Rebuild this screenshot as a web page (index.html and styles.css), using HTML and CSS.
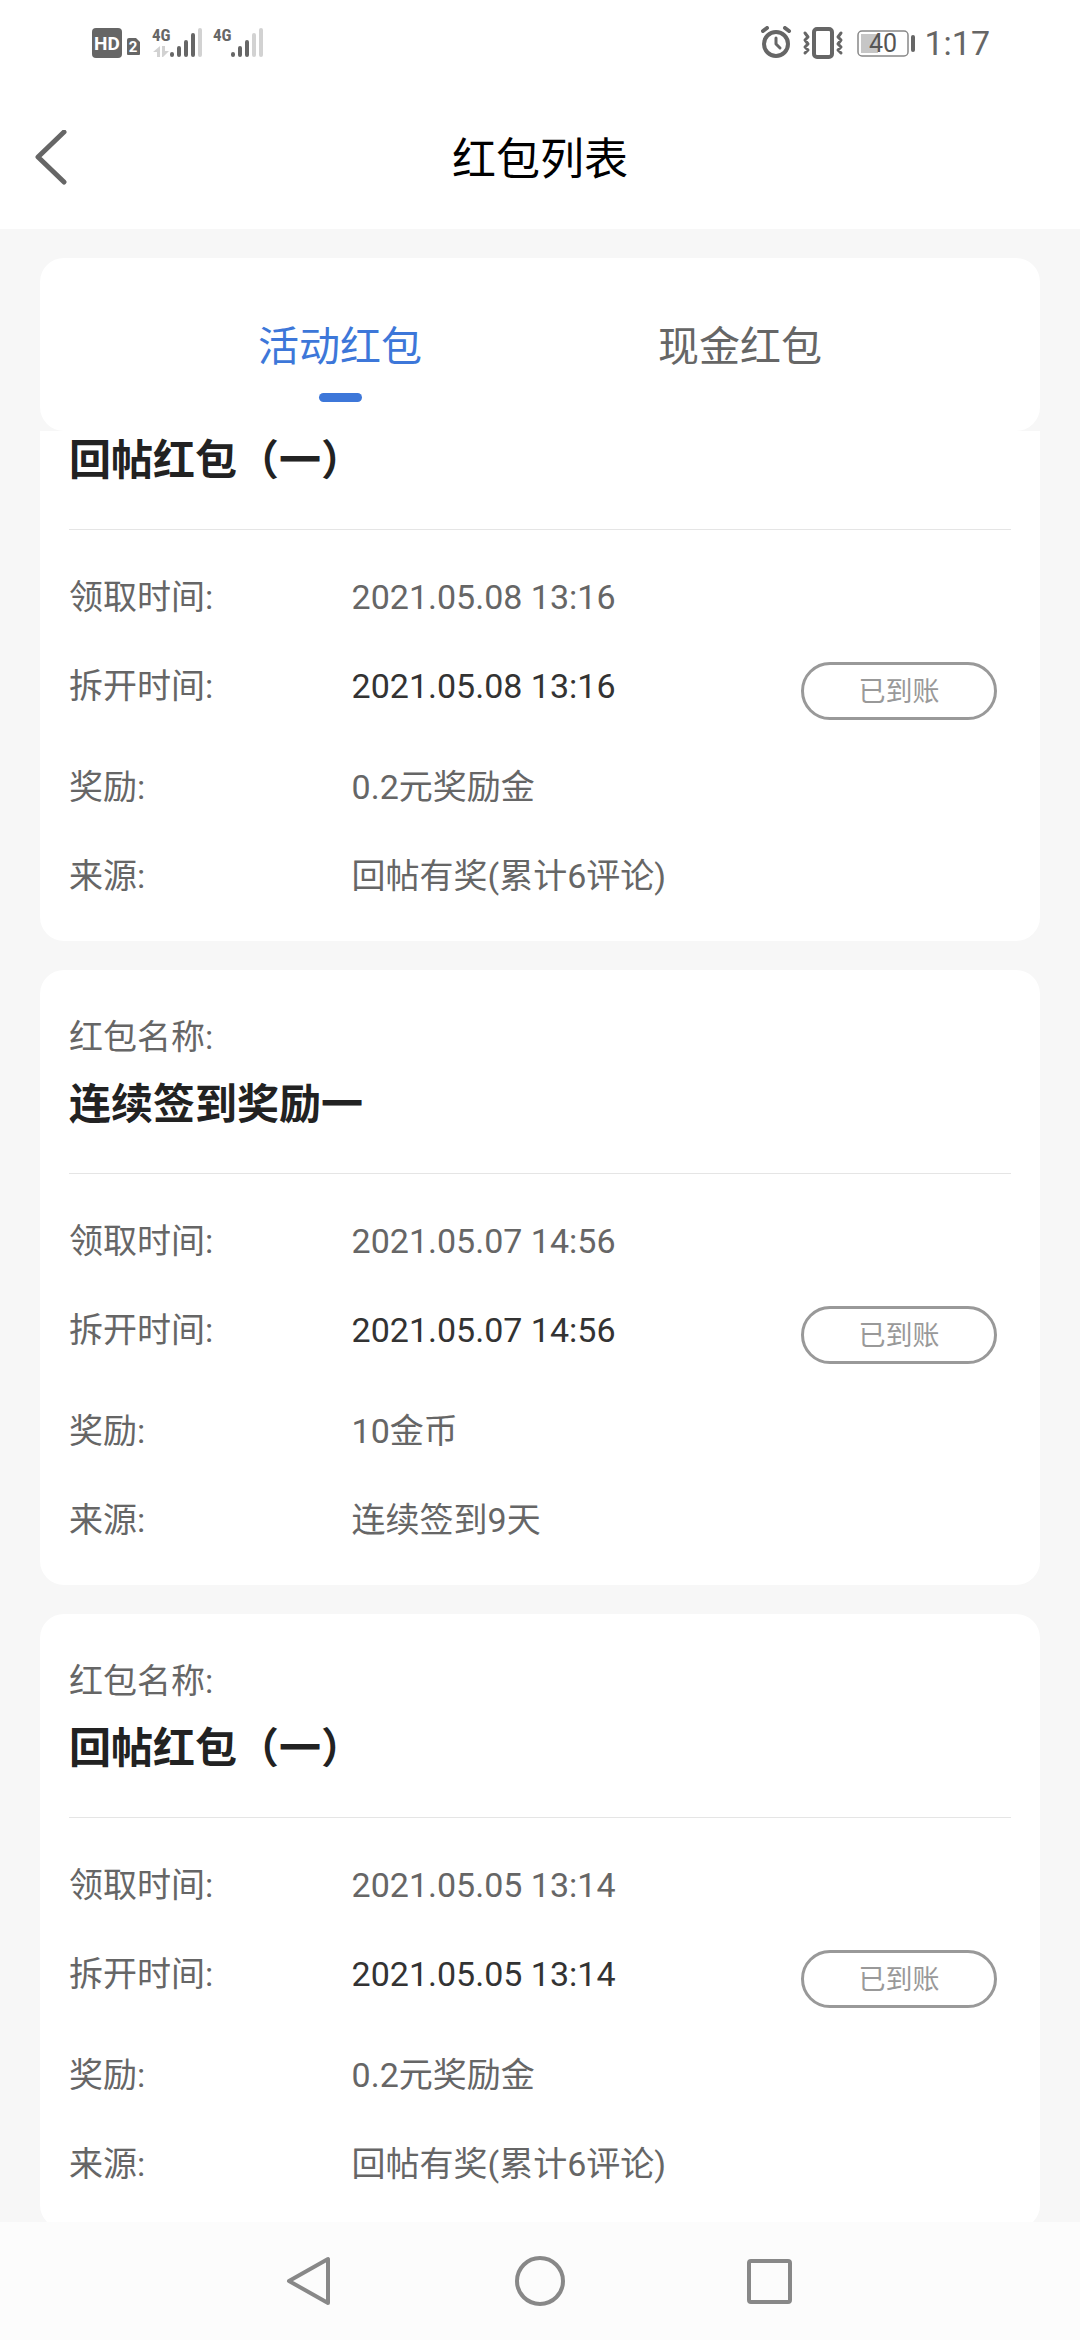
FILE: index.html
```
<!DOCTYPE html>
<html lang="zh-CN">
<head>
    <meta charset="UTF-8">
    <meta name="viewport" content="width=device-width, initial-scale=1.0">
    <title>红包列表</title>
    <link rel="stylesheet" href="styles.css">
</head>
<body>
    <div class="status-bar">
        <svg class="status-left" width="176" height="34" viewBox="0 0 176 34">
            <rect x="0" y="2" width="30" height="30" rx="4" fill="#666"/>
            <text class="hd-text" x="15" y="24" text-anchor="middle">HD</text>
            <path d="M37 12h7l4 4v12a1 1 0 0 1-1 1H36a1 1 0 0 1-1-1V14a2 2 0 0 1 2-2z" fill="#666"/>
            <text class="sim-text" x="41" y="26" text-anchor="middle">2</text>
            <text class="net-text" x="60" y="15">4G</text>
            <path d="M68 20v11h-3v-5h-4zM70 20h3v5h4l-6 6h-1z" fill="#d2d2d2"/>
            <g stroke-width="4" stroke-linecap="round" stroke="#666">
                <path d="M80 28v1M87 22v7M94 16v13M101 9v20"/>
                <path d="M108 4v25" stroke="#d2d2d2"/>
            </g>
            <text class="net-text" x="121" y="15">4G</text>
            <g stroke-width="4" stroke-linecap="round" stroke="#666">
                <path d="M141 28v1M148 22v7M155 16v13"/>
                <path d="M162 9v20M169 4v25" stroke="#d2d2d2"/>
            </g>
        </svg>
        <div class="status-right">
            <svg width="156" height="34" viewBox="0 0 156 34" fill="none" stroke="#666" stroke-linecap="round" stroke-linejoin="round">
                <circle cx="15" cy="18" r="12" stroke-width="4"/>
                <path d="M15 12v6l4 4" stroke-width="3"/>
                <path d="M2 5l4-3M28 5l-4-3" stroke-width="4"/>
                <rect x="53" y="3" width="18" height="28" rx="3" stroke-width="4"/>
                <path d="M44 7l3 4-3 3 3 4-3 3 3 3-3 3M80 7l-3 4 3 3-3 4 3 3-3 3 3 3" stroke-width="3"/>
                <rect x="97" y="5" width="50" height="25" rx="4" stroke="#888" stroke-width="1.5"/>
                <rect x="100" y="8" width="17" height="19" fill="#c6c6c6" stroke="none"/>
                <path d="M152 11v13" stroke-width="4"/>
                <text class="battery-text" x="122" y="26" text-anchor="middle">40</text>
            </svg>
            <span class="clock">1:17</span>
        </div>
    </div>

    <header class="header">
        <button class="back-button" type="button" aria-label="返回">
            <svg width="34" height="56" viewBox="0 0 34 56" fill="none" stroke="#666" stroke-width="5" stroke-linecap="round" stroke-linejoin="round">
                <path d="M29 2L3 27l26 25"/>
            </svg>
        </button>
        <h1>红包列表</h1>
    </header>

    <main class="content">
        <nav class="tabs">
            <button class="tab active" type="button">活动红包</button>
            <button class="tab" type="button">现金红包</button>
        </nav>

        <div class="list">
            <section class="card card-first">
                <h2>回帖红包（一）</h2>
                <dl class="rows">
                    <div class="row"><dt>领取时间:</dt><dd>2021.05.08 13:16</dd></div>
                    <div class="row row-opened"><dt>拆开时间:</dt><dd>2021.05.08 13:16</dd><dd class="action"><button class="state-button" type="button">已到账</button></dd></div>
                    <div class="row"><dt>奖励:</dt><dd>0.2元奖励金</dd></div>
                    <div class="row"><dt>来源:</dt><dd>回帖有奖(累计6评论)</dd></div>
                </dl>
            </section>

            <section class="card">
                <p class="card-label">红包名称:</p>
                <h2>连续签到奖励一</h2>
                <dl class="rows">
                    <div class="row"><dt>领取时间:</dt><dd>2021.05.07 14:56</dd></div>
                    <div class="row row-opened"><dt>拆开时间:</dt><dd>2021.05.07 14:56</dd><dd class="action"><button class="state-button" type="button">已到账</button></dd></div>
                    <div class="row"><dt>奖励:</dt><dd>10金币</dd></div>
                    <div class="row"><dt>来源:</dt><dd>连续签到9天</dd></div>
                </dl>
            </section>

            <section class="card">
                <p class="card-label">红包名称:</p>
                <h2>回帖红包（一）</h2>
                <dl class="rows">
                    <div class="row"><dt>领取时间:</dt><dd>2021.05.05 13:14</dd></div>
                    <div class="row row-opened"><dt>拆开时间:</dt><dd>2021.05.05 13:14</dd><dd class="action"><button class="state-button" type="button">已到账</button></dd></div>
                    <div class="row"><dt>奖励:</dt><dd>0.2元奖励金</dd></div>
                    <div class="row"><dt>来源:</dt><dd>回帖有奖(累计6评论)</dd></div>
                </dl>
            </section>
        </div>
    </main>

    <footer class="nav-bar">
        <button type="button" aria-label="返回">
            <svg width="50" height="50" viewBox="0 0 50 50"><path d="M43 3v44L4 25z"/></svg>
        </button>
        <button type="button" aria-label="主页">
            <svg width="50" height="50" viewBox="0 0 50 50"><circle cx="25" cy="25" r="23"/></svg>
        </button>
        <button type="button" aria-label="最近任务">
            <svg width="50" height="50" viewBox="0 0 50 50"><rect x="4" y="5" width="41" height="41" rx="2"/></svg>
        </button>
    </footer>
</body>
</html>
```
FILE: styles.css
```
* {
    box-sizing: border-box;
}
body {
    font-family: Roboto, "Noto Sans CJK SC", sans-serif;
    margin: 0;
    height: 100vh;
    display: flex;
    flex-direction: column;
    background-color: #f7f7f7;
    color: #666;
}
h1, h2, p, dl, dd {
    margin: 0;
}
button {
    font-family: inherit;
    background: none;
    border: none;
    padding: 0;
    cursor: pointer;
}
svg {
    display: block;
}
.status-bar {
    display: flex;
    justify-content: space-between;
    align-items: center;
    height: 86px;
    padding: 0 90px 0 92px;
    background-color: #fff;
}
.status-right {
    display: flex;
    align-items: center;
    gap: 7px;
}
.clock {
    font-size: 34px;
    line-height: 40px;
}
.hd-text {
    font-size: 19px;
    font-weight: bold;
    fill: #fff;
}
.sim-text {
    font-size: 15px;
    font-weight: bold;
    fill: #fff;
}
.net-text {
    font-family: "Roboto Condensed", Roboto, sans-serif;
    font-size: 17px;
    font-weight: bold;
    fill: #666;
}
.battery-text {
    font-size: 25px;
    fill: #555;
    stroke: none;
}
.header {
    position: relative;
    display: flex;
    align-items: center;
    justify-content: center;
    height: 143px;
    background-color: #fff;
}
.header h1 {
    padding-top: 4px;
    font-size: 44px;
    line-height: 64px;
    font-weight: normal;
    color: #000;
}
.back-button {
    position: absolute;
    left: 35px;
}
.content {
    flex: 1;
    min-height: 0;
    display: flex;
    flex-direction: column;
    padding: 29px 40px 0;
}
.tabs {
    display: flex;
    padding: 0 100px;
    height: 173px;
    flex-shrink: 0;
    background-color: #fff;
    border-radius: 24px;
}
.tab {
    flex: 1;
    display: flex;
    flex-direction: column;
    align-items: center;
    padding-top: 59px;
    font-size: 41px;
    line-height: 60px;
    color: #666;
}
.tab.active {
    color: #3d77d9;
}
.tab.active::after {
    content: "";
    width: 43px;
    height: 9px;
    margin-top: 16px;
    border-radius: 5px;
    background-color: #3d77d9;
}
.list {
    flex: 1;
    min-height: 0;
    display: flex;
    flex-direction: column;
    gap: 29px;
    overflow: hidden;
}
.card {
    flex-shrink: 0;
    background-color: #fff;
    border-radius: 24px;
    padding: 43px 29px 41px;
    font-size: 34px;
    line-height: 48px;
}
.card h2 {
    margin-top: 14px;
    padding-bottom: 38px;
    border-bottom: 1px solid #e5e5e5;
    font-size: 42px;
    line-height: 60px;
    font-weight: bold;
    color: #222;
}
/* top of the first card is scrolled away under the tabs */
.card-first {
    padding-top: 0;
    border-radius: 0 0 24px 24px;
}
.card-first h2 {
    margin-top: 0;
}
.rows {
    display: flex;
    flex-direction: column;
    gap: 41px;
    padding-top: 43px;
}
.row {
    display: flex;
    align-items: flex-start;
}
.row dt {
    width: 30%;
}
.row-opened {
    height: 60px;
    color: #333;
}
.row-opened dt {
    color: #666;
}
.action {
    margin-left: auto;
    padding-right: 14px;
}
.state-button {
    display: block;
    width: 196px;
    height: 58px;
    padding-top: 2px;
    border: 3px solid #999;
    border-radius: 29px;
    font-size: 27px;
    line-height: 40px;
    color: #999;
}
.nav-bar {
    display: flex;
    justify-content: center;
    align-items: center;
    gap: 180px;
    height: 118px;
    background-color: #fcfcfc;
}
.nav-bar svg {
    fill: none;
    stroke: #888;
    stroke-width: 4;
    stroke-linejoin: round;
}
```
